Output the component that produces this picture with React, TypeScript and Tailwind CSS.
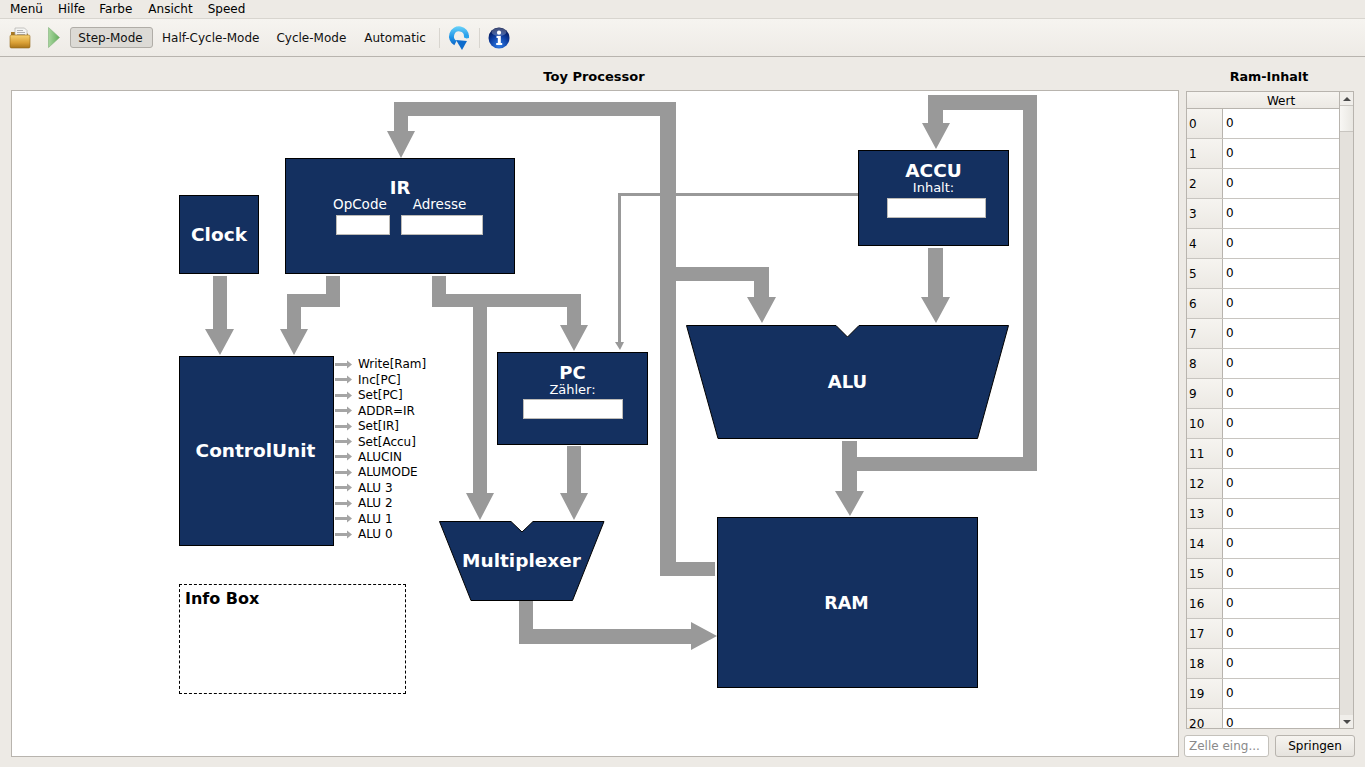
const MENU = [
  { label: 'Menü', className: '' },
  { label: 'Hilfe', className: 'ml-[15px]' },
  { label: 'Farbe', className: 'ml-[14px]' },
  { label: 'Ansicht', className: 'ml-[16px]' },
  { label: 'Speed', className: 'ml-[15px]' },
]
const SIGNALS = ['Write[Ram]', 'Inc[PC]', 'Set[PC]', 'ADDR=IR', 'Set[IR]', 'Set[Accu]', 'ALUCIN', 'ALUMODE', 'ALU 3', 'ALU 2', 'ALU 1', 'ALU 0']
const ROWS = Array.from({ length: 21 }, (_, i) => i)

// all bus lines, in page coordinates
const BUSES = [
  // clock -> control unit
  'M213 276H227V329H234L220 355L205 329H213Z',
  // IR -> control unit
  'M326 276H340V307H301V329H308L294 355L280 329H287V294H326Z',
  // IR -> PC and multiplexer
  'M432 276H446V294H581V325H588L574 351L560 325H567V307H487V493H494L480 520L466 493H473V307H432Z',
  // PC -> multiplexer
  'M567 446H581V493H588L574 520L560 493H567Z',
  // multiplexer -> RAM
  'M519 601H533V629H691V622L717 636L691 650V644H519Z',
  // RAM -> IR, with branch to ALU
  'M715 562V576H660V116H408V131H415L401 158L387 131H394V102H676V267H769V297H776L762 323L747 297H754V281H676V562Z',
  // ACCU -> ALU
  'M928 248H943V297H950L936 323L921 297H928Z',
  // ALU -> RAM and back to ACCU
  'M842 441H857V457H1023V110H943V123H950L936 149L922 123H928V95H1037V471H857V491H864L850 516L835 491H842Z',
  // ACCU -> PC
  'M858 193V196H621V342H624L620 350L615 342H618V193Z',
]

function Block({ className, title, titleClass, children }: { className: string; title: string; titleClass?: string; children?: React.ReactNode }) {
  return (
    <div className={`absolute flex flex-col items-center bg-[#143060] border border-black text-white ${className}`}>
      <div className={`font-bold leading-none ${titleClass ?? 'text-[18.5px]'}`}>{title}</div>
      {children}
    </div>
  )
}

function Field({ className }: { className: string }) {
  return <div className={`h-[20px] bg-white border border-[#bdbbb7] ${className}`} />
}

function FolderIcon() {
  return (
    <svg width="22" height="22" viewBox="0 0 22 22">
      <defs>
        <linearGradient id="fold" x1="0" y1="0" x2="0" y2="1">
          <stop offset="0" stopColor="#f7d272" />
          <stop offset="0.6" stopColor="#d99f34" />
          <stop offset="1" stopColor="#a8741a" />
        </linearGradient>
      </defs>
      <path d="M2 5H7L8.5 6.5H19V10H2Z" fill="#a87a24" />
      <path d="M6 1H15.5L18 3.5V12H6Z" fill="#f4f4f2" stroke="#b0b0ac" strokeWidth="0.7" />
      <path d="M8 3.5H14M8 5.5H16M8 7.5H16" stroke="#a9a9a9" strokeWidth="0.9" />
      <path d="M1 9.5C1 8.5 1.5 8 2.5 8H19.5C20.5 8 21 8.5 21 9.5V19.5C21 20.5 20.5 21 19.5 21H2.5C1.5 21 1 20.5 1 19.5Z" fill="url(#fold)" stroke="#94691b" strokeWidth="0.6" />
    </svg>
  )
}

function PlayIcon() {
  return (
    <svg width="12" height="21" viewBox="0 0 12 21">
      <defs>
        <linearGradient id="play" x1="0" y1="0" x2="1" y2="0">
          <stop offset="0" stopColor="#a9d79f" />
          <stop offset="1" stopColor="#63ad5c" />
        </linearGradient>
      </defs>
      <path d="M0.5 0.5L11.5 10.5L0.5 20.5Z" fill="url(#play)" stroke="#7fb079" strokeWidth="0.6" />
    </svg>
  )
}

function RefreshIcon() {
  return (
    <svg width="22" height="25" viewBox="0 0 22 25">
      <defs>
        <linearGradient id="ref" gradientUnits="userSpaceOnUse" x1="0" y1="1" x2="0" y2="22">
          <stop offset="0" stopColor="#6ad4fa" />
          <stop offset="0.55" stopColor="#1e92e6" />
          <stop offset="1" stopColor="#0a5cc0" />
        </linearGradient>
      </defs>
      <path d="M18.5 11.5A7.5 7.5 0 1 0 7.5 18" fill="none" stroke="url(#ref)" strokeWidth="5" />
      <path d="M18.5 9.5L21 10.5V13L18.5 13.5L16 12.5V10Z" fill="#2aa4ec" />
      <path d="M8 15L19 16L14 25Z" fill="#0e6ccc" />
    </svg>
  )
}

function InfoIcon() {
  return (
    <svg width="22" height="22" viewBox="0 0 22 22">
      <defs>
        <radialGradient id="inf" cx="0.5" cy="0.85" r="0.8">
          <stop offset="0" stopColor="#2f7ee8" />
          <stop offset="0.6" stopColor="#0b3a9c" />
          <stop offset="1" stopColor="#04154f" />
        </radialGradient>
      </defs>
      <circle cx="11" cy="11" r="10.5" fill="url(#inf)" />
      <ellipse cx="11" cy="5" rx="7.5" ry="4" fill="#ffffff" opacity="0.25" />
      <circle cx="11" cy="5.7" r="2.1" fill="#fff" />
      <path d="M8.5 9H12.8V16H14.2V18H8.2V16H9.8V11H8.5Z" fill="#fff" />
    </svg>
  )
}

function Diagram() {
  return (
    <div className="absolute left-[-12px] top-[-91px] w-[1365px] h-[767px]">
      <svg className="absolute left-0 top-0" width="1365" height="767" viewBox="0 0 1365 767">
        {BUSES.map((d) => (
          <path key={d} d={d} fill="#999999" />
        ))}
        {/* ALU and multiplexer bodies */}
        <path d="M686.5 325.5H836L847.5 337L859 325.5H1008.5L977.5 438.5H718Z" fill="#143060" stroke="#000" />
        <path d="M439.5 521.5H511L522 532L533 521.5H604L572.5 600.5H471Z" fill="#143060" stroke="#000" />
      </svg>

      <Block className="left-[179px] top-[195px] w-[80px] h-[79px] justify-center pt-[2px]" title="Clock" />

      <Block className="left-[285px] top-[158px] w-[230px] h-[116px] pt-[20px]" title="IR" titleClass="text-[18px]">
        <div className="flex text-[13.5px] leading-none self-start ml-[47px] mt-[1px] gap-[27px]">
          <span>OpCode</span>
          <span className="ml-[-1px]">Adresse</span>
        </div>
        <div className="flex self-start ml-[50px] mt-[3px] gap-[11px]">
          <Field className="w-[54px]" />
          <Field className="w-[82px]" />
        </div>
      </Block>

      <Block className="left-[858px] top-[150px] w-[151px] h-[96px] pt-[11px]" title="ACCU">
        <div className="text-[13px] leading-none">Inhalt:</div>
        <Field className="w-[99px] mt-[4px] ml-[6px]" />
      </Block>

      <Block className="left-[497px] top-[352px] w-[151px] h-[93px] pt-[11px]" title="PC" titleClass="text-[18px]">
        <div className="text-[13px] leading-none mt-[1px]">Zähler:</div>
        <Field className="w-[100px] mt-[3px]" />
      </Block>

      <Block className="left-[179px] top-[356px] w-[155px] h-[190px] justify-center" title="ControlUnit" titleClass="text-[18.5px] mr-[2px]" />
      <Block className="left-[717px] top-[517px] w-[261px] h-[171px] justify-center pt-[2px]" title="RAM" titleClass="text-[17.5px] mr-[2px]" />

      <div className="absolute left-[686px] top-[373px] w-[323px] text-center text-white font-bold text-[18px] leading-[18px]">ALU</div>
      <div className="absolute left-[439px] top-[551px] w-[165px] text-center text-white font-bold text-[18.5px] leading-[20px]">Multiplexer</div>

      <div className="absolute left-[335px] top-[356.6px] flex flex-col">
        {SIGNALS.map((s) => (
          <div key={s} className="flex items-center h-[15.45px] text-[12px] text-black">
            <svg width="17" height="9" viewBox="0 0 17 9">
              <path d="M0 3H12V0.5L17 4.5L12 8.5V6H0Z" fill="#a5a5a5" />
            </svg>
            <span className="ml-[6px] leading-none">{s}</span>
          </div>
        ))}
      </div>

      <div className="absolute left-[179px] top-[584px] w-[227px] h-[110px] border border-dashed border-black px-[5px] pt-[4px] text-[16px] font-bold leading-[20px] text-black">
        Info Box
      </div>
    </div>
  )
}

function RamTable() {
  return (
    <div className="h-[638px] ml-[2px] mr-[1px] flex border border-[#b8b4ae] bg-white overflow-hidden text-[12px] text-black">
      <div className="flex-1 flex flex-col overflow-hidden">
        <div className="h-[17px] shrink-0 flex items-center justify-center bg-gradient-to-b from-[#f6f4f0] to-[#ece9e4] border-b border-[#b8b4ae] pl-[36px] pt-[1px]">
          Wert
        </div>
        {ROWS.map((r) => (
          <div key={r} className="h-[30px] shrink-0 flex border-b border-[#c8c5c0]">
            <div className="w-[36px] shrink-0 flex items-center pl-[2px] pt-[1px] bg-gradient-to-b from-[#f6f4f0] to-[#ece9e4] border-r border-[#b8b4ae]">{r}</div>
            <div className="pl-[3px] pt-[6px] leading-[16px]">0</div>
          </div>
        ))}
      </div>
      <div className="w-[14px] shrink-0 flex flex-col bg-[#e4e1dc] border-l border-[#b8b4ae]">
        <div className="h-[13px] flex items-center justify-center bg-[#f0eeea]">
          <div className="w-0 h-0 border-x-[4px] border-x-transparent border-b-[4px] border-b-[#4a4a4a]" />
        </div>
        <div className="h-[27px] bg-gradient-to-r from-[#f8f7f4] to-[#e9e7e2] border-y border-[#c8c5c0]" />
        <div className="flex-1" />
        <div className="h-[13px] flex items-center justify-center bg-[#f0eeea]">
          <div className="w-0 h-0 border-x-[4px] border-x-transparent border-t-[4px] border-t-[#4a4a4a]" />
        </div>
      </div>
    </div>
  )
}

export default function App() {
  return (
    <div className="w-[1365px] h-[767px] flex flex-col bg-[#edeae5] overflow-hidden text-black font-['DejaVu_Sans',sans-serif]">
      <div className="h-[19px] flex items-center pl-[10px] text-[12px] border-b border-[#d8d5cf]">
        {MENU.map((m) => (
          <span key={m.label} className={m.className}>{m.label}</span>
        ))}
      </div>

      <div className="h-[38px] flex items-center pl-[9px] text-[12px] text-[#111] bg-gradient-to-b from-[#f6f4f0] to-[#eeebe6] border-b border-[#b8b4ae]">
        <FolderIcon />
        <div className="ml-[17px]"><PlayIcon /></div>
        <div className="ml-[10px] h-[21px] w-[83px] flex items-center justify-center pr-[2px] rounded-[3px] border border-[#b0ada7] bg-[#dcdad5]">Step-Mode</div>
        <span className="ml-[9px] pt-[1px]">Half-Cycle-Mode</span>
        <span className="ml-[17px] pt-[1px]">Cycle-Mode</span>
        <span className="ml-[18px] pt-[1px]">Automatic</span>
        <div className="ml-[13px] w-px h-[20px] bg-[#d8d5cf]" />
        <div className="ml-[8px]"><RefreshIcon /></div>
        <div className="ml-[9px] w-px h-[20px] bg-[#d8d5cf]" />
        <div className="ml-[8px]"><InfoIcon /></div>
      </div>

      <div className="flex-1 flex pl-[11px] pr-[10px] gap-[5px]">
        <div className="w-[1168px] flex flex-col">
          <div className="h-[33px] flex items-center justify-center pt-[6px] pr-[2px] text-[13px] font-bold">Toy Processor</div>
          <div className="relative h-[667px] bg-white border border-[#b8b4ae]">
            <Diagram />
          </div>
        </div>

        <div className="flex-1 flex flex-col">
          <div className="h-[34px] flex items-center justify-center pt-[6px] pr-[1px] text-[12.7px] font-bold">Ram-Inhalt</div>
          <RamTable />
          <div className="flex gap-[6px] mt-[6px] text-[12px]">
            <div className="w-[85px] h-[22px] flex items-center pl-[4px] bg-white border border-[#c4c1bb] rounded-[3px] text-[#8a8a8a]">Zelle eing...</div>
            <div className="w-[80px] h-[22px] flex items-center justify-center bg-gradient-to-b from-[#f6f4f0] to-[#e6e3de] border border-[#b8b4ae] rounded-[3px]">Springen</div>
          </div>
        </div>
      </div>
    </div>
  )
}
